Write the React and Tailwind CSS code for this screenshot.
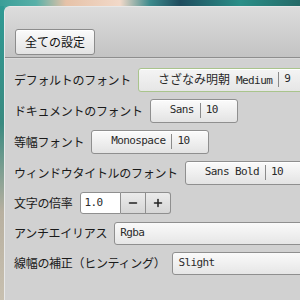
import React from "react";
import { Minus, Plus } from "lucide-react";

const jp = "font-['Noto_Sans_CJK_JP',sans-serif]";
const mono = "font-['DejaVu_Sans_Mono','Noto_Sans_CJK_JP',monospace] text-[11px] tracking-[-0.6px]";

const FontButton = ({ name, size, focused }) => (
  <div
    className={`shrink-0 h-[24px] flex items-center px-[19px] rounded-[3px] border ${
      focused
        ? "border-[#a9c48c] bg-[linear-gradient(#f4f4f4,#e6e6e6)]"
        : "border-[#8f8f8f] bg-[linear-gradient(#fbfbfb,#e3e3e3)]"
    } shadow-[inset_0_1px_0_#ffffff]`}
  >
    <span className={`${mono} whitespace-nowrap text-[#2a2a2a]`}>{name}</span>
    <span className="ml-[6px] mr-[5px] w-px h-[15px] bg-[#8a8a8a]"></span>
    <span className={`${mono} text-[#2a2a2a]`}>{size}</span>
  </div>
);

const Row = ({ label, h = "h-[25px]", children }) => (
  <div className={`flex items-center gap-[7px] ${h} whitespace-nowrap`}>
    <span className={`${jp} text-[12px] tracking-[-0.3px] text-[#1a1a1a] shrink-0`}>
      {label}
    </span>
    {children}
  </div>
);

const Combo = ({ value, width }) => (
  <div
    className={`shrink-0 ${width} h-[23px] flex items-center pl-[5px] rounded-[3px] border border-[#8f8f8f] bg-[linear-gradient(#fafafa,#e6e6e6)]`}
  >
    <span className={`${mono} text-[#2a2a2a]`}>{value}</span>
  </div>
);

export default function App() {
  return (
    <div className="w-[300px] h-[300px] overflow-hidden flex flex-col bg-[linear-gradient(90deg,#3a9e98_0%,#58b0a8_12%,#e6c2a8_22%,#f2d9c9_40%,#3c8a8c_50%,#1f4c5e_60%,#2a8f88_80%,#256a68_100%)]">
      <div className="flex flex-1 mt-[6px]">
        <div className="w-[4px] bg-[linear-gradient(#2f9a94_0%,#3a8a80_40%,#b8b0a0_70%,#c8c0b0_100%)]"></div>
        <div className="flex-1 flex flex-col bg-[#d1d1d1] rounded-tl-[6px] border-l border-t border-[#e8e8e8] overflow-hidden">
          <div className="h-[51px] flex items-end pl-[10px] pb-[2px] bg-[linear-gradient(#dcdcdc,#c3c3c3)] border-b border-[#8e8e8e]">
            <div className="h-[26px] px-[9px] flex items-center rounded-[3px] border border-[#8c8c8c] bg-[linear-gradient(#fbfbfb,#e2e2e2)] shadow-[inset_0_1px_0_#ffffff]">
              <span className={`${jp} text-[12px] text-[#111]`}>全ての設定</span>
            </div>
          </div>
          <div className="flex flex-col gap-[6px] pt-[8px] pl-[9px] border-t border-[#dadada]">
            <Row label="デフォルトのフォント">
              <FontButton
                focused
                name={<><span className={`${jp} text-[12px] tracking-normal`}>さざなみ明朝</span> Medium</>}
                size="9"
              />
            </Row>
            <Row label="ドキュメントのフォント">
              <FontButton name="Sans" size="10" />
            </Row>
            <Row label="等幅フォント">
              <FontButton name="Monospace" size="10" />
            </Row>
            <Row label="ウィンドウタイトルのフォント">
              <FontButton name="Sans Bold" size="10" />
            </Row>
            <Row label="文字の倍率" h="h-[24px]">
              <div className="shrink-0 flex items-center">
                <div className="w-[41px] h-[22px] flex items-center pl-[4px] bg-white border border-[#8f8f8f] rounded-l-[3px]">
                  <span className={`${mono} text-[#2a2a2a]`}>1.0</span>
                </div>
                <div className="w-[25px] h-[22px] flex items-center justify-center border-y border-r border-[#8f8f8f] bg-[linear-gradient(#ebebeb,#d6d6d6)]">
                  <Minus size={12} strokeWidth={3} className="text-[#222]" />
                </div>
                <div className="w-[25px] h-[22px] flex items-center justify-center border-y border-r border-[#8f8f8f] rounded-r-[3px] bg-[linear-gradient(#ebebeb,#d6d6d6)]">
                  <Plus size={12} strokeWidth={3} className="text-[#222]" />
                </div>
              </div>
            </Row>
            <Row label="アンチエイリアス" h="h-[24px]">
              <Combo value="Rgba" width="w-[220px]" />
            </Row>
            <Row label="線幅の補正（ヒンティング）" h="h-[24px]">
              <Combo value="Slight" width="w-[200px]" />
            </Row>
          </div>
        </div>
      </div>
    </div>
  );
}
